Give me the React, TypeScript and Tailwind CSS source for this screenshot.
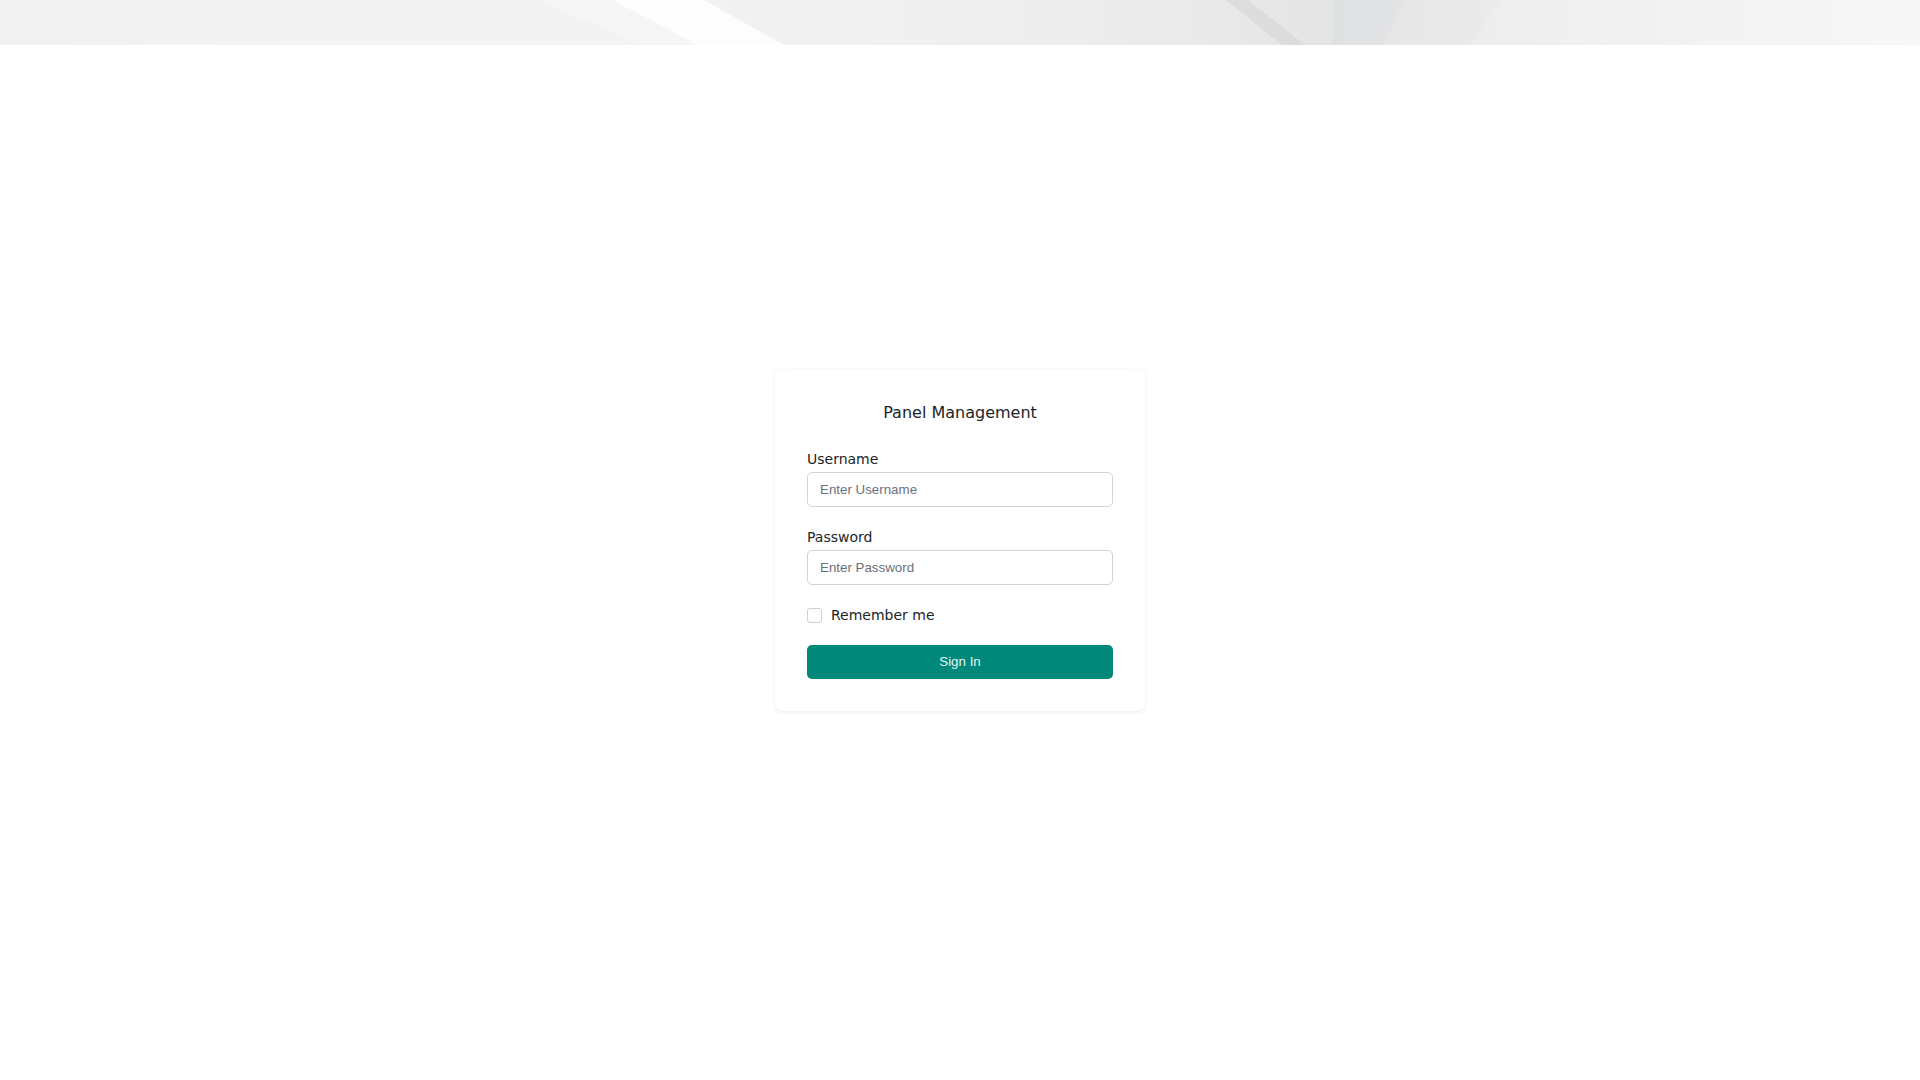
import React from 'react'

const sans = "font-['DejaVu_Sans',sans-serif]"
const arial = "font-['Liberation_Sans',Arial,sans-serif]"

function HeaderBand() {
  return (
    <div className="h-[45px] w-full shrink-0 bg-[#f2f2f2]">
      <svg className="block h-full w-full" viewBox="0 0 1920 45" preserveAspectRatio="none">
        <defs>
          <linearGradient id="base" x1="0" y1="0" x2="1" y2="0">
            <stop offset="0" stopColor="#f2f2f2" />
            <stop offset="0.3" stopColor="#f3f3f3" />
            <stop offset="0.5" stopColor="#efefef" />
            <stop offset="0.62" stopColor="#eaeaea" />
            <stop offset="0.7" stopColor="#e3e4e5" />
            <stop offset="0.78" stopColor="#eeeeef" />
            <stop offset="0.9" stopColor="#f3f3f3" />
            <stop offset="1" stopColor="#f7f7f7" />
          </linearGradient>
          <linearGradient id="dark" x1="0" y1="0" x2="1" y2="0">
            <stop offset="0" stopColor="#dfe0e2" />
            <stop offset="1" stopColor="#e2e3e5" />
          </linearGradient>
        </defs>
        <rect x="0" y="0" width="1920" height="45" fill="url(#base)" />
        <polygon points="540,0 612,0 698,45 640,45" fill="#f6f6f6" />
        <polygon points="612,0 704,0 784,45 698,45" fill="#ffffff" opacity="0.85" />
        <polygon points="1226,0 1248,0 1305,45 1282,45" fill="#d9d9d9" opacity="0.8" />
        <polygon points="1333,0 1405,0 1384,45 1333,45" fill="url(#dark)" />
        <polygon points="1405,0 1500,0 1470,45 1384,45" fill="#e7e8e9" opacity="0.6" />
      </svg>
    </div>
  )
}

export default function App() {
  return (
    <div className="flex h-screen w-full flex-col bg-white">
      <HeaderBand />

      <main className="flex flex-1 items-center justify-center pb-[45px]">
        <div className="w-[370px] rounded-lg bg-white p-8 shadow-[0_1px_4px_rgba(0,0,0,0.08)]">
          <h1 className={`${sans} mb-6 text-center text-base leading-6 text-[#212529]`}>
            Panel Management
          </h1>

          <label className={`${sans} mb-[3px] block text-sm leading-5 text-[#212529]`}>Username</label>
          <input
            type="text"
            placeholder="Enter Username"
            className={`${arial} mb-5 block h-[35px] w-full rounded-[5px] border border-[#d3d3d6] px-3 text-[13.33px] text-[#212529] outline-none placeholder:text-[#6b6f7b]`}
          />

          <label className={`${sans} mb-[3px] block text-sm leading-5 text-[#212529]`}>Password</label>
          <input
            type="password"
            placeholder="Enter Password"
            className={`${arial} mb-5 block h-[35px] w-full rounded-[5px] border border-[#d3d3d6] px-3 text-[13.33px] text-[#212529] outline-none placeholder:text-[#6b6f7b]`}
          />

          <label className="mb-5 flex h-5 items-center gap-[9px]">
            <span className="block h-[15px] w-[15px] rounded-[3px] border border-[#d0d0d4] bg-white" />
            <span className={`${sans} text-sm leading-5 text-[#212529]`}>Remember me</span>
          </label>

          <button
            className={`${arial} block h-[34px] w-full rounded-[5px] bg-[#00897b] text-[13.33px] text-[#e6f3f1]`}
          >
            Sign In
          </button>
        </div>
      </main>
    </div>
  )
}
